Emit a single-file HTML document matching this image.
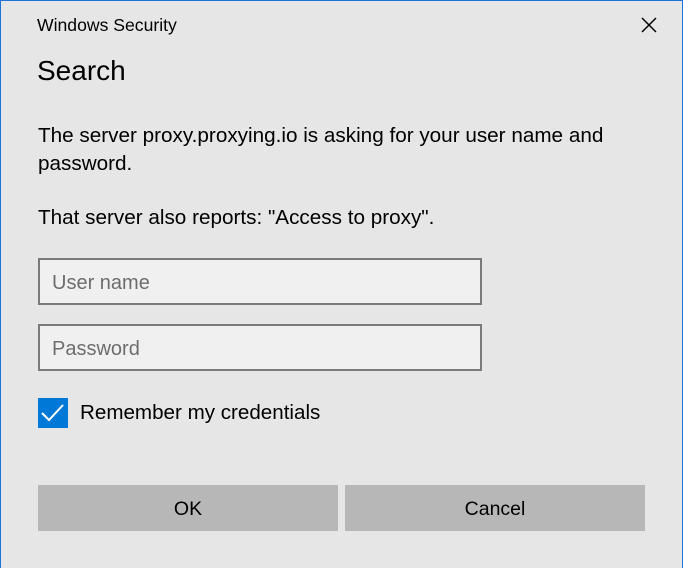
<!DOCTYPE html>
<html><head><style>
body{margin:0;width:683px;height:568px;background:#e6e6e6;font-family:"Liberation Sans",sans-serif;color:#000;position:relative;overflow:hidden}
.bl{position:absolute;left:0;top:0;width:1px;height:568px;background:#1a73d6}
.bt{position:absolute;left:0;top:0;width:683px;height:1px;background:#1a73d6}
.br{position:absolute;right:0;top:0;width:1px;height:568px;background:#1a73d6}
.t{position:absolute;white-space:nowrap}
.inp{position:absolute;left:38px;width:440px;height:43px;border:2px solid #7a7a7a;background:#f0f0f0;box-sizing:content-box}
.inp span{position:absolute;left:12px;top:12px;font-size:20px;color:#6d6d6d}
.btn{position:absolute;top:485px;height:46px;background:#b7b7b7;font-size:19.5px;text-align:center;line-height:49px}
</style></head><body>
<div class="bl"></div><div class="bt"></div><div class="br"></div>
<div class="t" style="left:37px;top:15px;font-size:17.6px">Windows Security</div>
<svg style="position:absolute;left:641px;top:17px" width="16" height="16"><path d="M1 1L15 15M15 1L1 15" stroke="#000" stroke-width="1.5"/></svg>
<div class="t" style="left:37px;top:55px;font-size:28px">Search</div>
<div class="t" style="left:38px;top:122px;font-size:20.7px;line-height:28px">The server proxy.proxying.io is asking for your user name and<br>password.</div>
<div class="t" style="left:38px;top:206px;font-size:20.7px">That server also reports: "Access to proxy".</div>
<div class="inp" style="top:258px"><span>User name</span></div>
<div class="inp" style="top:324px"><span>Password</span></div>
<div style="position:absolute;left:38px;top:398px;width:30px;height:30px;background:#0078d7"></div>
<svg style="position:absolute;left:38px;top:398px" width="30" height="30"><path d="M4 15L11 22L25 7" stroke="#fff" stroke-width="2" fill="none"/></svg>
<div class="t" style="left:80px;top:401px;font-size:20.6px">Remember my credentials</div>
<div class="btn" style="left:38px;width:300px">OK</div>
<div class="btn" style="left:345px;width:300px">Cancel</div>
</body></html>
